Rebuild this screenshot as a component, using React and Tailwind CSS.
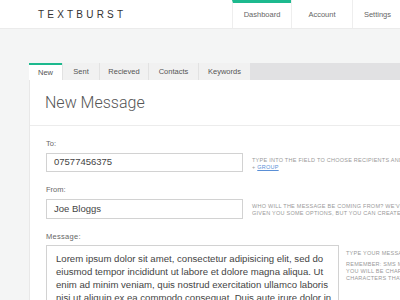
import React from 'react'

const tabs = ['New', 'Sent', 'Recieved', 'Contacts', 'Keywords']
const tabWidths = ['w-[33px]', 'w-[37px]', 'w-[49px]', 'w-[50px]', 'w-[52px]']

function Hint({ children, className = '' }) {
  return (
    <div className={`text-[5.5px] leading-[7px] tracking-[0.25px] uppercase text-[#9a9a9a] whitespace-nowrap ${className}`}>
      {children}
    </div>
  )
}

function App() {
  return (
    <div className="w-[400px] h-[300px] overflow-hidden bg-[#f4f5f5] font-['Liberation_Sans',Arial,sans-serif]">
      <header className="h-[29px] bg-white flex items-stretch border-b border-[#ebebeb]">
        <div className="pl-[38px] flex items-center text-[10px] tracking-[3.2px] text-[#333]">TEXTBURST</div>
        <nav className="ml-auto flex items-stretch">
          <div className="w-[59px] border-l border-[#eeeeee] border-t-[3px] border-t-[#1db98e] flex items-center justify-center text-[7.5px] text-[#666] pb-[1px]">
            Dashboard
          </div>
          <div className="w-[61px] border-l border-[#eeeeee] flex items-center justify-center text-[7.5px] text-[#666] pt-[2px]">
            Account
          </div>
          <div className="w-[48px] border-l border-[#eeeeee] flex items-center justify-center text-[7.5px] text-[#666] pt-[2px] pl-[2px]">
            Settings
          </div>
        </nav>
      </header>

      <main className="pl-[29px] pt-[34px] w-[480px]">
        <div className="h-[17px] bg-[#e1e1e3] flex">
          {tabs.map((t, i) => (
            <div
              key={t}
              className={`${tabWidths[i]} flex items-center justify-center text-[7.5px] text-[#555] ${
                i === 0
                  ? 'bg-white border-t-2 border-[#1db98e]'
                  : 'bg-[#f1f1f1] border-l border-[#e2e2e2] pt-[1px]'
              }`}
            >
              {t}
            </div>
          ))}
        </div>

        <div className="bg-white border-l border-[#e8e8e8] h-[230px]">
          <div className="h-[46px] flex items-center pl-[15px] border-b border-[#ececec]">
            <h1 className="font-['Roboto',sans-serif] font-light text-[16px] text-[#555]">New Message</h1>
          </div>

          <div className="pl-[16px]">
            <div className="pt-[13px] text-[7.5px] leading-[9px] text-[#666]">To:</div>
            <div className="mt-[5px] flex">
              <div className="w-[197px] h-[19px] border border-[#d2d2d2] flex items-center pl-[7px] text-[9.5px] text-[#444]">
                07577456375
              </div>
              <div className="ml-[9px] pt-[3.5px]">
                <Hint>Type into the field to choose recipients and</Hint>
                <Hint>
                  + <span className="text-[#5a8fd6] underline">Group</span>
                </Hint>
              </div>
            </div>

            <div className="pt-[13px] text-[7.5px] leading-[9px] text-[#666]">From:</div>
            <div className="mt-[5px] flex">
              <div className="w-[197px] h-[20px] border border-[#d2d2d2] flex items-center pl-[7px] text-[9.5px] text-[#444]">
                Joe Bloggs
              </div>
              <div className="ml-[9px] pt-[4px]">
                <Hint>Who will the message be coming from? We've</Hint>
                <Hint>Given you some options, but you can create</Hint>
              </div>
            </div>

            <div className="pt-[12.5px] text-[7.5px] leading-[9px] text-[#666] tracking-[0.3px]">Message:</div>
            <div className="mt-[4.5px] flex">
              <div className="w-[293px] h-[80px] border border-[#d2d2d2] pl-[9px] pt-[6px] text-[9.6px] leading-[13px] text-[#444] whitespace-nowrap overflow-hidden">
                <div>Lorem ipsum dolor sit amet, consectetur adipisicing elit, sed do</div>
                <div>eiusmod tempor incididunt ut labore et dolore magna aliqua. Ut</div>
                <div>enim ad minim veniam, quis nostrud exercitation ullamco laboris</div>
                <div>nisi ut aliquip ex ea commodo consequat. Duis aute irure dolor in</div>
              </div>
              <div className="ml-[7px] pt-[5px]">
                <Hint>Type your message here</Hint>
                <div className="h-[4px]" />
                <Hint>Remember: SMS messages are limited to</Hint>
                <Hint>You will be charged for any</Hint>
                <Hint>Characters that exceed the limit</Hint>
              </div>
            </div>
          </div>
        </div>
      </main>
    </div>
  )
}

export default App
